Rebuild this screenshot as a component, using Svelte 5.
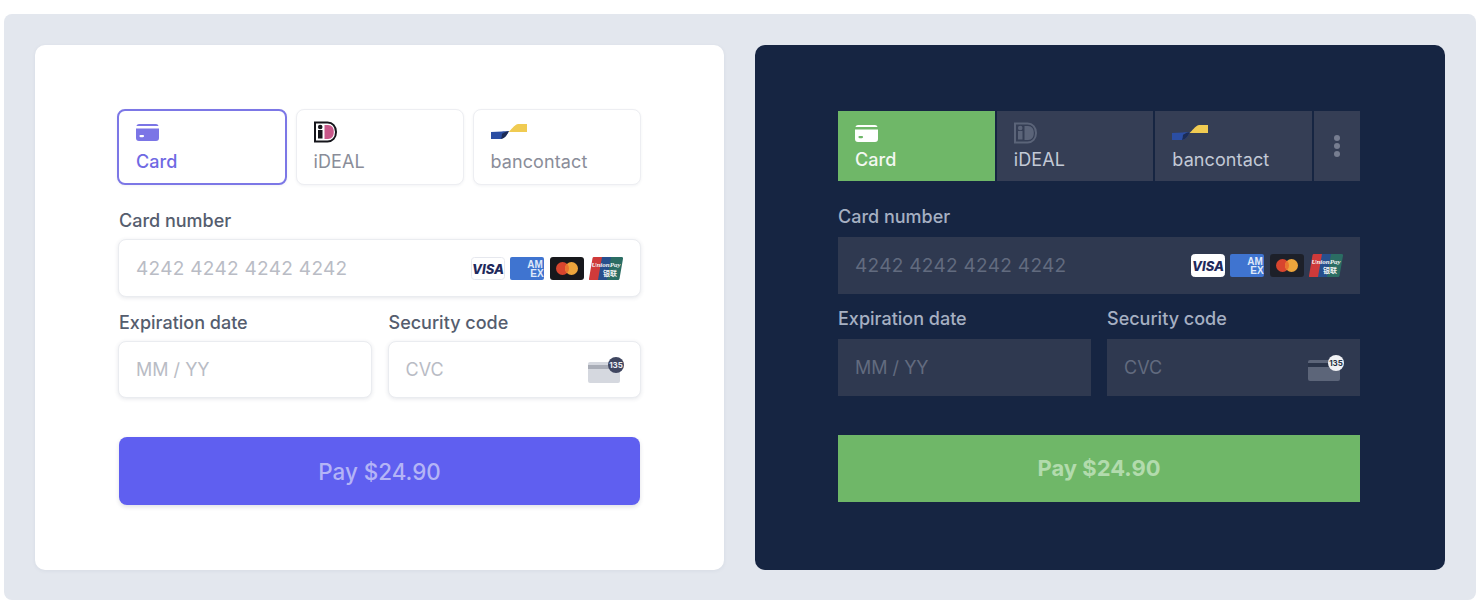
<script lang="ts">
	const themes = ['light', 'dark'];
	const tabs = ['Card', 'iDEAL', 'bancontact'];
</script>

{#snippet cardIcon()}
	<svg class="tab-icon" width="24" height="20" viewBox="0 -1 24 20">
		<path class="fill" d="M3 1h17a3 3 0 0 1 2.600 2H.400A3 3 0 0 1 3 1z" />
		<path class="fill" fill-rule="evenodd" d="M0 5.500h23V15a3 3 0 0 1-3 3H3a3 3 0 0 1-3-3z M4.500 12a1.100 1.100 0 0 0 0 2.200h2.500a1.100 1.100 0 0 0 0-2.200z" />
	</svg>
{/snippet}

{#snippet idealIcon(dark: boolean)}
	<svg class="tab-icon" width="24" height="22" viewBox="0 0 24 22">
		{#if dark}
			<path d="M1 1.500h12.500c5 0 8.500 3.700 8.500 9.500s-3.500 9.500-8.500 9.500H1z" fill="none" stroke="#5b6479" stroke-width="2" />
			<rect x="4" y="9" width="4.500" height="8.500" fill="#5b6479" />
			<circle cx="6.200" cy="6" r="2.300" fill="#5b6479" />
			<path d="M10.500 4h3.500c4 0 5.800 3 5.800 7s-1.800 7-5.800 7h-3.500z" fill="#5b6479" />
		{:else}
			<path d="M1 1.500h12.500c5 0 8.500 3.700 8.500 9.500s-3.500 9.500-8.500 9.500H1z" fill="#fff" stroke="#15151b" stroke-width="2" />
			<rect x="4" y="9" width="4.500" height="8.500" fill="#15151b" />
			<circle cx="6.200" cy="6" r="2.300" fill="#15151b" />
			<path d="M10.500 4h3.500c4 0 5.800 3 5.800 7s-1.800 7-5.800 7h-3.500z" fill="#c9588a" />
		{/if}
	</svg>
{/snippet}

{#snippet bancontactIcon()}
	<svg class="tab-icon" width="38" height="18" viewBox="0 0 38 18">
		<path d="M0 9l11-.6c3-.2 5 .2 7-.4-2 4-4 7-8 8H0z" fill="#2b4ea3" />
		<path d="M18 8c-3 .5-5 1.500-7 2.800 0 2-.4 3.700-1 5.200 4-1 6-4 8-8z" fill="#1c2c55" />
		<path d="M17.500 9c3-2 5-7 9.500-8h9v8z" fill="#f0cb52" />
	</svg>
{/snippet}

{#snippet brands(dark: boolean)}
	<div class="brands">
		<svg width="34" height="23" viewBox="0 0 34 23">
			<rect x=".5" y=".5" width="33" height="22" rx="3" fill="#fff" stroke={dark ? '#fff' : '#e6e8ee'} />
			<text x="17" y="16.500" text-anchor="middle" class="visa">VISA</text>
		</svg>
		<svg width="34" height="23" viewBox="0 0 34 23">
			<rect width="34" height="23" rx="2" fill="#3f74d0" />
			<text x="25" y="10.500" text-anchor="middle" class="amex">AM</text>
			<text x="27" y="20" text-anchor="middle" class="amex">EX</text>
		</svg>
		<svg width="34" height="23" viewBox="0 0 34 23">
			<rect width="34" height="23" rx="3" fill={dark ? '#1d2029' : '#17181c'} />
			<circle cx="12.500" cy="11.500" r="6.500" fill="#d8452e" />
			<circle cx="21.500" cy="11.500" r="6.500" fill="#eda53c" />
			<path d="M17 6.800a6.500 6.500 0 0 1 0 9.400 6.500 6.500 0 0 1 0-9.400z" fill="#e9752f" />
		</svg>
		<svg width="34" height="23" viewBox="0 0 34 23">
			<path d="M5 0h10l-4 23H1a1 1 0 0 1-1-1.200L3.500 1.200A1.500 1.500 0 0 1 5 0z" fill="#cf3a3a" />
			<path d="M13 0h11l-4 23H9z" fill="#274f8d" />
			<path d="M22 0h10.500a1.500 1.500 0 0 1 1.500 1.800L30.500 21.800A1.500 1.500 0 0 1 29 23H18z" fill="#2b6d63" />
			<text x="17" y="10" text-anchor="middle" class="union">UnionPay</text>
			<text x="21" y="18.500" text-anchor="middle" class="union cjk">银联</text>
		</svg>
	</div>
{/snippet}

{#snippet cvcIcon(dark: boolean)}
	<svg class="cvc" width="36" height="26" viewBox="0 0 36 26">
		<rect x="0" y="5" width="32" height="21" rx="2" fill={dark ? '#5c6579' : '#d5d8df'} />
		<rect x="0" y="8" width="32" height="4" fill={dark ? '#2a3449' : '#a9adb7'} />
		<circle cx="28" cy="8" r="8" fill={dark ? '#f1f2f5' : '#3f4660'} />
		<text x="28" y="11" text-anchor="middle" class="cvc-num" fill={dark ? '#28303f' : '#eef0f4'}>135</text>
	</svg>
{/snippet}

<main class="frame">
	{#each themes as theme}
		{@const dark = theme === 'dark'}
		<section class="panel {theme}">
			<div class="tabs">
				{#each tabs as tab, i}
					<div class="tab" class:active={i === 0}>
						<span class="icon-slot">
							{#if i === 0}
								{@render cardIcon()}
							{:else if i === 1}
								{@render idealIcon(dark)}
							{:else}
								{@render bancontactIcon()}
							{/if}
						</span>
						<span class="tab-name">{tab}</span>
					</div>
				{/each}
				{#if dark}
					<div class="tab more">
						<i></i><i></i><i></i>
					</div>
				{/if}
			</div>

			<div class="field number">
				<span class="label">Card number</span>
				<div class="input">
					<span class="placeholder digits">4242 4242 4242 4242</span>
					{@render brands(dark)}
				</div>
			</div>

			<div class="row">
				<div class="field">
					<span class="label">Expiration date</span>
					<div class="input short"><span class="placeholder">MM / YY</span></div>
				</div>
				<div class="field">
					<span class="label">Security code</span>
					<div class="input short">
						<span class="placeholder">CVC</span>
						{@render cvcIcon(dark)}
					</div>
				</div>
			</div>

			<div class="pay">Pay $24.90</div>
		</section>
	{/each}
</main>

<style>
	:global(body) {
		background: #fff;
	}
	.frame {
		display: flex;
		gap: 31px;
		box-sizing: border-box;
		width: 1472px;
		height: 586px;
		margin: 14px 0 0 4px;
		padding: 31px;
		background: #e3e7ee;
		border-radius: 8px;
		font-family: Inter, 'Liberation Sans', sans-serif;
	}
	.panel {
		box-sizing: border-box;
		width: 690px;
		height: 525px;
		padding: 64px 83px 0;
		border-radius: 10px;
	}
	.panel.light {
		width: 689px;
		background: #fff;
		box-shadow: 0 1px 4px rgba(40, 50, 80, 0.06);
	}
	.panel.dark {
		padding: 66px 85px 0 83px;
		background: #162542;
	}

	.tabs {
		display: flex;
	}
	.light .tabs {
		gap: 8.500px;
		margin-left: -1px;
	}
	.dark .tabs {
		gap: 2px;
	}
	.tab {
		flex: 1;
		box-sizing: border-box;
		display: flex;
		flex-direction: column;
		font-size: 18px;
		line-height: 24px;
		letter-spacing: 0.100px;
	}
	.tab.active {
		font-weight: 500;
	}
	.light .tab {
		height: 76px;
		padding: 9px 0 0 17px;
		color: #8a8d99;
		background: #fff;
		border: 1px solid #edeef2;
		border-radius: 8px;
		box-shadow: 0 1px 3px rgba(40, 50, 80, 0.06);
	}
	.light .tab.active {
		flex: 0 0 170px;
		color: #6f69e3;
		border: 2px solid #7c77e6;
		padding: 8px 0 0 17px;
	}
	.dark .tab {
		height: 70px;
		padding: 9px 0 0 17px;
		color: #c3c9d6;
		background: #353e55;
	}
	.dark .tab.active {
		color: #f4f8f2;
		background: #6fb768;
	}
	.dark .tab.more {
		flex: 0 0 46px;
		padding: 0;
		align-items: center;
		justify-content: center;
		gap: 2px;
	}
	.more i {
		width: 6px;
		height: 6px;
		border-radius: 50%;
		background: #767d90;
	}
	.icon-slot {
		display: flex;
		align-items: center;
		height: 26px;
		margin-bottom: 5px;
	}
	.dark .icon-slot {
		margin-bottom: 2px;
	}
	.tab-icon {
		display: block;
	}
	.light .fill {
		fill: #7b75e6;
	}
	.dark .fill {
		fill: #fff;
	}

	.field {
		flex: 1;
		min-width: 0;
	}
	.number {
		margin-top: 24px;
	}
	.label {
		display: block;
		font-size: 18px;
		font-weight: 500;
		line-height: 24px;
		margin-bottom: 6px;
	}
	.light .label {
		padding-left: 1px;
		color: #555d6e;
	}
	.dark .label {
		margin-bottom: 8px;
		color: #a6b0c2;
	}
	.input {
		box-sizing: border-box;
		display: flex;
		align-items: center;
		justify-content: space-between;
		height: 58px;
		padding: 0 17px;
		font-size: 18px;
	}
	.input.short {
		height: 57px;
	}
	.light .input {
		background: #fff;
		border: 1px solid #eaecf0;
		border-radius: 8px;
		box-shadow: 0 1px 4px rgba(40, 50, 80, 0.12);
	}
	.dark .input {
		height: 57px;
		background: #2f3950;
	}
	.placeholder.digits {
		font-size: 19px;
		letter-spacing: 0.300px;
	}
	.light .placeholder {
		color: #b9bcc5;
	}
	.dark .placeholder {
		color: #626b7f;
	}
	.row {
		display: flex;
		gap: 16px;
		margin-top: 14px;
	}
	.dark .row {
		margin-top: 13px;
	}

	.brands {
		display: flex;
		gap: 5.330px;
	}
	.brands svg {
		display: block;
	}
	.visa {
		font: italic 800 13px Inter, sans-serif;
		fill: #1f2a5c;
	}
	.amex {
		font: 700 10px 'Liberation Sans', sans-serif;
		fill: #dfe9fa;
	}
	.union {
		font: italic 700 7px 'Liberation Serif', serif;
		fill: #f2f2f2;
	}
	.union.cjk {
		font: 700 7px 'Noto Sans CJK SC', sans-serif;
	}
	.cvc {
		display: block;
		margin-right: -1px;
	}
	.cvc-num {
		font: 700 8px Inter, sans-serif;
	}

	.pay {
		display: flex;
		align-items: center;
		justify-content: center;
		height: 68px;
		margin-top: 39px;
		font-size: 22px;
	}
	.light .pay {
		margin-left: 1px;
		margin-right: 1px;
		font-size: 22.400px;
		font-weight: 500;
		color: #b4b4f6;
		background: #5f5ff0;
		border-radius: 8px;
		box-shadow: 0 2px 4px rgba(40, 50, 80, 0.15);
	}
	.dark .pay {
		height: 67px;
		padding-bottom: 2px;
		box-sizing: border-box;
		font-weight: 700;
		color: #b2dbad;
		background: #6fb768;
	}
</style>
